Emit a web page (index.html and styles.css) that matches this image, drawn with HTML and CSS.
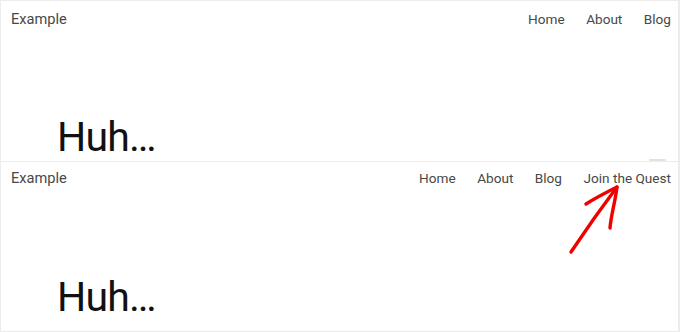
FILE: index.html
```html
<!DOCTYPE html>
<html lang="en">
<head>
    <meta charset="UTF-8">
    <meta name="viewport" content="width=device-width, initial-scale=1.0">
    <title>Huh</title>
    <link rel="stylesheet" href="styles.css">
</head>
<body>
    <div class="shot shot-top">
        <header class="bar">
            <a href="#" class="brand">Example</a>
            <nav class="menu">
                <a href="#">Home</a>
                <a href="#">About</a>
                <a href="#">Blog</a>
            </nav>
        </header>
        <h1 class="huh">Huh…</h1>
        <span class="thumb"></span>
    </div>

    <div class="shot shot-bottom">
        <header class="bar">
            <a href="#" class="brand">Example</a>
            <nav class="menu">
                <a href="#">Home</a>
                <a href="#">About</a>
                <a href="#">Blog</a>
                <a href="#">Join the Quest</a>
            </nav>
        </header>
        <h1 class="huh">Huh…</h1>

        <!-- red marker arrow pointing at the new link -->
        <svg class="arrow" width="60" height="80" viewBox="0 0 60 80">
            <path d="M10 75 C 24 54, 38 34, 56 10" />
            <path d="M25 27 C 36 20, 46 15, 56 10 C 54 26, 50 38, 49 51" />
        </svg>
    </div>
</body>
</html>
```

FILE: styles.css
```css
* {
    margin: 0;
    padding: 0;
    box-sizing: border-box;
    font-family: 'Roboto', 'Liberation Sans', sans-serif;
}

body {
    background: #fff;
    width: 680px;
    height: 332px;
    overflow: hidden;
}

.shot {
    position: relative;
    width: 680px;
    border: 1px solid #ececec;
    border-right-width: 2px;
    overflow: hidden;
}

.shot-top {
    height: 162px;
}

.shot-bottom {
    height: 170px;
    border-top: none;
}

.bar {
    display: flex;
    justify-content: space-between;
    align-items: center;
    padding: 9px 7px 0 10px;
}

.shot-bottom .bar {
    padding-top: 7px;
}

.bar a {
    color: #484848;
    text-decoration: none;
    font-size: 13.6px;
    line-height: 18px;
}

.bar .brand {
    font-size: 14.6px;
}

.menu {
    display: flex;
    gap: 21.5px;
}

.huh {
    font-size: 41px;
    font-weight: 400;
    color: #111;
    line-height: 50px;
    padding-left: 56px;
    margin-top: 84px;
    letter-spacing: -0.8px;
}

.shot-bottom .huh {
    margin-top: 85px;
}

/* little scrollbar remnant under the first shot */
.thumb {
    position: absolute;
    right: 12px;
    bottom: 0;
    width: 17px;
    height: 2px;
    background: #e2e2e2;
    border-radius: 1px;
}

.arrow {
    position: absolute;
    left: 560px;
    top: 15px;
    fill: none;
    stroke: #f20000;
    stroke-width: 3.4;
    stroke-linecap: round;
    stroke-linejoin: round;
}
```
